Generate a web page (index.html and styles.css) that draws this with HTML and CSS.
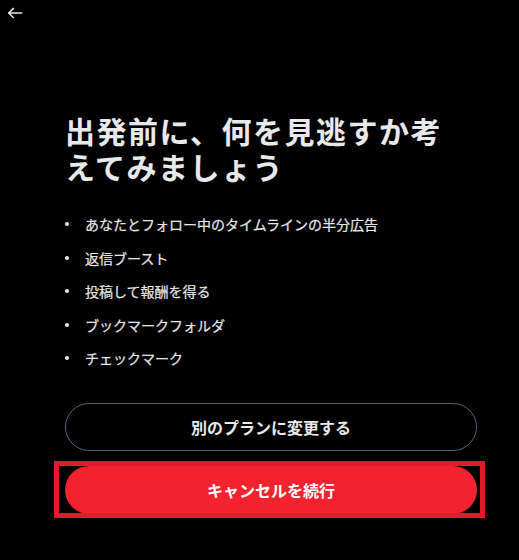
FILE: index.html
```html
<!DOCTYPE html>
<html lang="ja">
<head>
<meta charset="utf-8">
<link rel="stylesheet" href="styles.css">
</head>
<body>
<div class="page">
  <header class="topbar">
    <button class="back" aria-label="戻る">
      <svg width="16" height="12" viewBox="0 0 16 12" fill="none" stroke="#e7e9ea" stroke-width="1.5" stroke-linecap="square">
        <path d="M1.8 6H14.5"/>
        <path d="M6.2 1.6L1.8 6L6.2 10.4"/>
      </svg>
    </button>
  </header>
  <main class="content">
    <h1 class="title">出発前に、何を見逃すか考<br>えてみましょう</h1>
    <ul class="perks">
      <li>あなたとフォロー中のタイムラインの半分広告</li>
      <li>返信ブースト</li>
      <li>投稿して報酬を得る</li>
      <li>ブックマークフォルダ</li>
      <li>チェックマーク</li>
    </ul>
    <div class="actions">
      <button class="btn btn-outline">別のプランに変更する</button>
      <div class="danger-wrap">
        <button class="btn btn-danger">キャンセルを続行</button>
        <span class="highlight"></span>
      </div>
    </div>
  </main>
</div>
</body>
</html>
```

FILE: styles.css
```css
* { box-sizing: border-box; }
html, body {
  margin: 0;
  padding: 0;
  background: #000;
  height: 100%;
}
body {
  font-family: "Noto Sans CJK JP", "Noto Sans", sans-serif;
  color: #e7e9ea;
}
.page {
  width: 519px;
  min-height: 560px;
}
.topbar {
  height: 20px;
  padding: 0;
}
.back {
  display: block;
  margin: 0;
  padding: 7px 0 0 7px;
  background: none;
  border: 0;
  line-height: 0;
}
.content {
  margin-left: 65px;
  width: 412px;
  padding-top: 92px;
}
.title {
  margin: 0;
  font-size: 30px;
  letter-spacing: 1.5px;
  line-height: 36px;
  font-weight: 700;
  color: #e7e9ea;
}
.perks {
  list-style: none;
  margin: 30px 0 0 0;
  padding: 0;
  display: flex;
  flex-direction: column;
  gap: 13.5px;
}
.perks li {
  position: relative;
  padding-left: 20px;
  font-size: 14px;
  line-height: 20px;
  color: #e7e9ea;
  -webkit-text-stroke: 0.2px #e7e9ea;
}
.perks li::before {
  content: "";
  position: absolute;
  left: 0;
  top: 8px;
  width: 4px;
  height: 4px;
  border-radius: 50%;
  background: #e7e9ea;
}
.actions {
  margin-top: 35px;
  display: flex;
  flex-direction: column;
  gap: 15px;
}
.btn {
  display: block;
  width: 412px;
  height: 48px;
  border-radius: 24px;
  font-family: "Noto Sans CJK JP", "Noto Sans", sans-serif;
  font-size: 16px;
  font-weight: 700;
  padding: 0;
  margin: 0;
}
.btn-outline {
  background: #000;
  border: 1px solid #536471;
  color: #e7e9ea;
}
.btn-danger {
  background: #f4212e;
  border: 0;
  color: #fff;
}
.danger-wrap {
  position: relative;
}
.highlight {
  position: absolute;
  left: -11px;
  top: -5px;
  width: 431px;
  height: 57px;
  border: 5px solid #e3192c;
  pointer-events: none;
}
```
